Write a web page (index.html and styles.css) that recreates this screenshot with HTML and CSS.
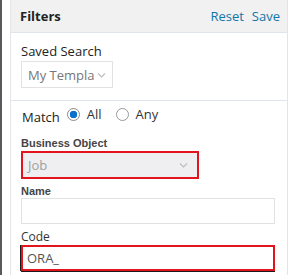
FILE: index.html
```html
<!DOCTYPE html>
<html>
<head>
<meta charset="utf-8">
<link rel="stylesheet" href="styles.css">
</head>
<body>
<div class="page">
  <div class="edge"></div>
  <div class="gap"></div>
  <div class="panel">
    <div class="header">
      <span class="title">Filters</span>
      <span class="actions"><a class="link">Reset</a><a class="link">Save</a></span>
    </div>
    <div class="section saved">
      <div class="label-lg">Saved Search</div>
      <div class="select small">
        <span class="sel-text">My Templa</span>
        <svg class="chev" width="9" height="6" viewBox="0 0 9 6"><path d="M1 1.5l3.5 3.5 3.5-3.5" fill="none" stroke="#bdbdbd" stroke-width="1.1"/></svg>
      </div>
    </div>
    <div class="section fields">
      <div class="match">
        <span class="match-label">Match</span>
        <span class="radio on"></span><span class="rlabel">All</span>
        <span class="radio"></span><span class="rlabel">Any</span>
      </div>
      <div class="label-sm bo">Business Object</div>
      <div class="select wide error disabled">
        <span class="sel-text">Job</span>
        <svg class="chev" width="9" height="6" viewBox="0 0 9 6"><path d="M1 1.5l3.5 3.5 3.5-3.5" fill="none" stroke="#bdbdbd" stroke-width="1.1"/></svg>
      </div>
      <div class="label-sm name">Name</div>
      <div class="input"></div>
      <div class="label-md">Code</div>
      <div class="input error focus"><span class="in-text">ORA_</span></div>
    </div>
  </div>
  <div class="rest"></div>
</div>
</body>
</html>
```
FILE: styles.css
```css
* { box-sizing: border-box; }
html, body { margin: 0; padding: 0; background: #fff; }
body { font-family: "Open Sans", "Segoe UI", sans-serif; color: #333; }
.page { display: flex; width: 295px; height: 275px; overflow: hidden; }
.edge { width: 2px; background: #5a5a5a; flex: none; }
.gap { width: 8px; flex: none; background: #fff; }
.panel { width: 278px; flex: none; border-left: 1px solid #e4e7ea; border-right: 1px solid #dfe5ea; display: flex; flex-direction: column; }
.panel > * { flex: none; }
.rest { flex: 1; background: #fff; }
.header { height: 33px; background: #f1f1f1; border-bottom: 1px solid #dfe5ea; display: flex; align-items: center; justify-content: space-between; padding: 0 7px 0 9px; }
.title { font-weight: 700; font-size: 13px; color: #222; }
.actions { display: flex; gap: 8px; }
.link { color: #0f76a8; font-size: 13px; }
.section { padding: 0 0 0 10px; }
.saved { height: 68px; border-bottom: 1px solid #dfe5ea; padding-top: 9px; }
.label-lg { font-size: 13px; color: #222; line-height: 18px; }
.select { display: flex; align-items: center; justify-content: space-between; border: 1px solid #e2e2e2; background: #fff; }
.select.small { width: 92px; height: 27px; margin-top: 1px; padding: 0 6px 0 6px; }
.sel-text { font-size: 13px; color: #777; white-space: nowrap; }
.fields { padding-top: 3px; }
.match { display: flex; align-items: center; height: 20px; }
.match-label { font-size: 13px; color: #222; margin-right: 7px; margin-top: 5px; margin-left: 1px; }
.radio { width: 13px; height: 13px; border: 1px solid #999; border-radius: 50%; display: inline-block; margin-right: 7px; background: #fff; flex: none; }
.radio.on { border-color: #8a8a8a; background: radial-gradient(circle, #0b6fd0 0 3.5px, #fff 4px); }
.rlabel { font-size: 13px; color: #333; margin-right: 14px; }
.label-sm { font-family: "Liberation Sans", Arial, sans-serif; font-weight: 700; font-size: 11px; color: #444; line-height: 14px; }
.label-sm.bo { margin-top: 12px; }
.label-sm.name { margin-top: 5px; }
.label-md { font-size: 12px; color: #333; margin-top: 5px; line-height: 16px; }
.select.wide { width: 178px; height: 28px; margin-top: 1px; padding: 0 9px 0 5px; }
.select.disabled { background: #efeff1; }
.select.disabled .sel-text { color: #a0a0a0; }
.error { border: 2px solid #e3141d !important; }
.input { width: 254px; height: 26px; border: 1px solid #e2e2e2; margin-top: 0; display: flex; align-items: center; padding-left: 6px; }
.input.focus { padding-left: 4px; box-shadow: 0 1px 0 #1a1a1a, -1px 0 0 #1a1a1a; }
.in-text { font-size: 13px; color: #555; }
```
